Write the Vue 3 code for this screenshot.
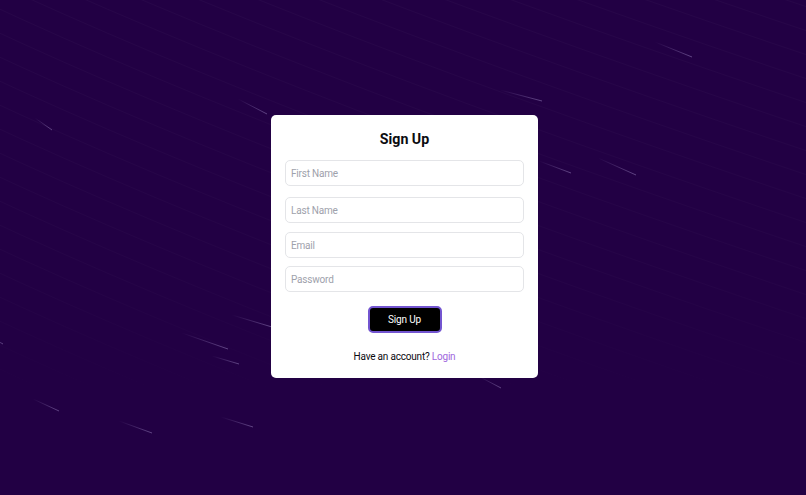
<script setup>
const fields = [
  { name: 'first', type: 'text', label: 'First Name' },
  { name: 'last', type: 'text', label: 'Last Name' },
  { name: 'email', type: 'email', label: 'Email' },
  { name: 'password', type: 'password', label: 'Password' },
]

// faint curved lines behind the form
const lines = []
for (let i = -30; i < 34; i++) {
  const y = i * 24
  lines.push(`M-20 ${y} Q 300 ${y + 150} 840 ${y + 330}`)
}

// shooting streaks: tail x, tail y, head x, head y
const streaks = [
  [35, 118, 52, 130],
  [238, 99, 267, 114],
  [655, 42, 692, 57],
  [500, 90, 542, 101],
  [539, 161, 571, 173],
  [598, 158, 636, 175],
  [-8, 338, 3, 344],
  [182, 333, 228, 349],
  [212, 356, 239, 364],
  [33, 399, 59, 411],
  [119, 421, 152, 433],
  [221, 417, 253, 427],
  [232, 315, 272, 327],
  [480, 377, 501, 388],
]
</script>

<template>
  <div class="page">
    <svg class="sky" viewBox="0 0 806 495" aria-hidden="true">
      <defs>
        <linearGradient id="fade" gradientUnits="userSpaceOnUse" x1="0" y1="0" x2="0" y2="400">
          <stop offset="0" stop-color="#fff" stop-opacity="0.025" />
          <stop offset="0.7" stop-color="#fff" stop-opacity="0.018" />
          <stop offset="1" stop-color="#fff" stop-opacity="0" />
        </linearGradient>
        <linearGradient id="streak" x1="0" y1="0" x2="1" y2="0">
          <stop offset="0" stop-color="#b9a6e0" stop-opacity="0" />
          <stop offset="1" stop-color="#b9a6e0" stop-opacity="0.42" />
        </linearGradient>
      </defs>
      <path v-for="(d, i) in lines" :key="i" :d="d" fill="none" stroke="url(#fade)" stroke-width="1" />
      <line
        v-for="(s, i) in streaks"
        :key="'s' + i"
        :x1="s[0]"
        :y1="s[1]"
        :x2="s[2]"
        :y2="s[3]"
        stroke="url(#streak)"
        stroke-width="1"
      />
    </svg>

    <form class="card" @submit.prevent>
      <h1 class="title">Sign Up</h1>
      <input
        v-for="f in fields"
        :key="f.name"
        class="field"
        :class="f.name"
        :type="f.type"
        :placeholder="f.label"
      />
      <button class="submit" type="submit">Sign Up</button>
      <p class="foot">Have an account? <a href="#" class="link">Login</a></p>
    </form>
  </div>
</template>

<style>
html, body { margin: 0; background: #220044; }
</style>

<style scoped>
.page { position: relative; width: 806px; height: 495px; overflow: hidden; background: #220044; display: flex; align-items: center; justify-content: center; padding: 0 0 2px 3px; box-sizing: border-box; font-family: Roboto, "Liberation Sans", sans-serif; }
.sky { position: absolute; inset: 0; width: 100%; height: 100%; }

.card { position: relative; width: 267px; height: 263px; box-sizing: border-box; background: #fff; border-radius: 5px; padding: 15px 14px 0; display: flex; flex-direction: column; align-items: center; }
.title { margin: 0 0 11px; font-size: 14.2px; line-height: 19px; font-weight: 700; color: #0b0b0f; }

.field { width: 239px; height: 26px; flex: none; box-sizing: border-box; margin: 0 0 8px; padding: 0 5px; border: 1px solid #e4e5e8; border-radius: 5px; outline: none; background: #fff; font-family: inherit; font-size: 10px; letter-spacing: -0.2px; color: #111; }
.field.first { margin-bottom: 11px; }
.field.last { margin-bottom: 9px; }
.field::placeholder { color: #9ea1ab; opacity: 1; }

.submit { width: 74px; height: 27px; flex: none; margin-top: 6px; box-sizing: border-box; background: #000; color: #fff; border: 2px solid #7355d0; border-radius: 5px; font-family: inherit; font-size: 10px; letter-spacing: -0.15px; cursor: pointer; }

.foot { margin: 17px 0 0; font-size: 10px; letter-spacing: -0.2px; line-height: 13px; color: #0b0b0f; }
.link { color: #a066dd; text-decoration: none; }
</style>
